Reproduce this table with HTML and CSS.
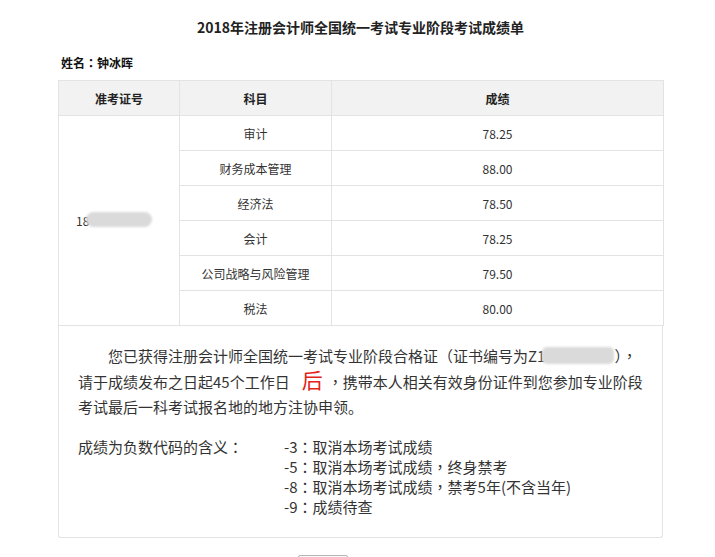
FILE: index.html
```html
<!DOCTYPE html>
<html lang="zh-CN">
<head>
<meta charset="utf-8">
<title>成绩单</title>
<link rel="stylesheet" href="styles.css">
</head>
<body>
<div class="page">
  <h1 class="title">2018年注册会计师全国统一考试专业阶段考试成绩单</h1>
  <div class="name">姓名<span class="p" lang="zh-TW">：</span>钟冰晖</div>
  <table class="scores">
    <colgroup>
      <col class="c1"><col class="c2"><col class="c3">
    </colgroup>
    <thead>
      <tr><th>准考证号</th><th>科目</th><th>成绩</th></tr>
    </thead>
    <tbody>
      <tr><td class="id" rowspan="6">18<span class="blur blur-id"></span></td><td>审计</td><td>78.25</td></tr>
      <tr><td>财务成本管理</td><td>88.00</td></tr>
      <tr><td>经济法</td><td>78.50</td></tr>
      <tr><td>会计</td><td>78.25</td></tr>
      <tr><td>公司战略与风险管理</td><td>79.50</td></tr>
      <tr><td>税法</td><td>80.00</td></tr>
    </tbody>
  </table>
  <div class="notice">
    <p class="msg">您已获得注册会计师全国统一考试专业阶段合格证<span class="p" lang="zh-TW">（</span>证书编号为Z1<span class="blur blur-cert"></span><span class="p" lang="zh-TW">）</span><span class="p" lang="zh-TW">，</span><br>请于成绩发布之日起45个工作日<span class="red">后</span><span class="p" lang="zh-TW">，</span>携带本人相关有效身份证件到您参加专业阶段<br>考试最后一科考试报名地的地方注协申领。</p>
    <div class="codes">
      <div class="codes-label">成绩为负数代码的含义<span class="p" lang="zh-TW">：</span></div>
      <ul class="codes-list">
        <li>-3<span class="p" lang="zh-TW">：</span>取消本场考试成绩</li>
        <li>-5<span class="p" lang="zh-TW">：</span>取消本场考试成绩<span class="p" lang="zh-TW">，</span>终身禁考</li>
        <li>-8<span class="p" lang="zh-TW">：</span>取消本场考试成绩<span class="p" lang="zh-TW">，</span>禁考5年(不含当年)</li>
        <li>-9<span class="p" lang="zh-TW">：</span>成绩待查</li>
      </ul>
    </div>
  </div>
  <div class="actions"><button class="btn" type="button" aria-label="返回"></button></div>
</div>
</body>
</html>
```
FILE: styles.css
```css
* { box-sizing: border-box; }
html, body { margin: 0; padding: 0; background: #fff; }
body {
  font-family: "Microsoft YaHei", "Noto Sans CJK SC", "Noto Sans", sans-serif;
  color: #333;
  overflow: hidden;
}
.p {
  font-family: "Noto Sans CJK TC", "Noto Sans CJK SC", sans-serif;
}
.page {
  width: 605px;
  margin-left: 58px;
}
.title {
  margin: 17px 0 0;
  font-size: 14px;
  line-height: 20px;
  font-weight: bold;
  color: #222;
  text-align: center;
}
.name {
  margin: 17px 0 0 3px;
  font-size: 12px;
  line-height: 18px;
  font-weight: bold;
  color: #111;
}
.scores {
  margin-top: 8px;
  width: 605px;
  border-collapse: collapse;
  table-layout: fixed;
  font-size: 12px;
}
.c1 { width: 121px; }
.c2 { width: 152px; }
.c3 { width: 332px; }
.scores th, .scores td {
  border: 1px solid #e3e3e3;
  height: 35px;
  padding: 0;
  text-align: center;
  vertical-align: middle;
  color: #333;
}
.scores th {
  background: #f2f2f2;
  font-weight: bold;
  color: #222;
}
.scores td.id {
  text-align: left;
  padding-left: 17px;
  white-space: nowrap;
}
.blur {
  display: inline-block;
  background: #dadada;
  border-radius: 8px;
  vertical-align: middle;
  filter: blur(0.8px);
}
.blur-id {
  width: 66px;
  height: 15px;
  margin-left: -3px;
  margin-top: -6px;
}
.blur-cert {
  width: 72px;
  height: 17px;
  margin-left: -3px;
  margin-top: -4px;
  border-radius: 5px;
}
.notice {
  border: 1px solid #e3e3e3;
  border-top: none;
  border-radius: 0 0 3px 3px;
  padding: 17px 19px 20px;
  font-size: 15px;
  color: #333;
}
.msg {
  margin: 0;
  line-height: 25.5px;
  text-indent: 30px;
  white-space: nowrap;
}
.red {
  color: #e2231a;
  font-size: 21px;
  margin: 0 5px 0 12px;
  line-height: 20px;
}
.codes {
  display: flex;
  margin-top: 17px;
  line-height: 20px;
}
.codes-label { width: 206px; flex: none; }
.codes-list {
  list-style: none;
  margin: 0;
  padding: 0;
}
.actions {
  margin-top: 17px;
  padding-left: 240px;
}
.btn {
  display: block;
  width: 50px;
  height: 30px;
  border: 1px solid #b5b5b5;
  border-radius: 2px;
  background: #f8f8f8;
}
```
